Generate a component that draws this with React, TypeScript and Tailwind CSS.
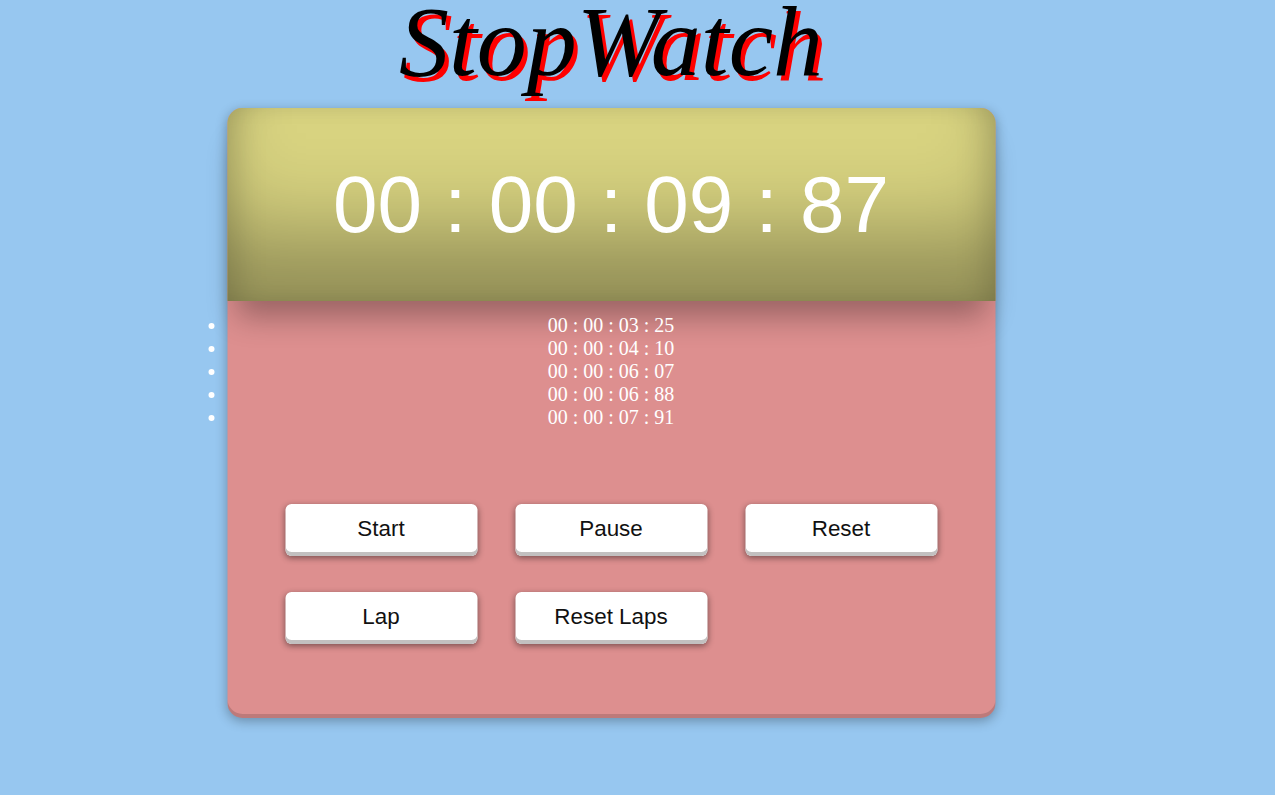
const laps = ["00 : 00 : 03 : 25", "00 : 00 : 04 : 10", "00 : 00 : 06 : 07", "00 : 00 : 06 : 88", "00 : 00 : 07 : 91"];
const buttons = ["Start", "Pause", "Reset", "Lap", "Reset Laps"];

export default function App() {
  return (
    <div className="min-h-[795px] w-full bg-[#97c7f0]">
      <div className="mx-auto flex w-[768px] -translate-x-[26.5px] flex-col items-center">
        <h1 className="h-[108px] font-['Liberation_Serif',serif] text-[100px] leading-[83px] font-normal whitespace-nowrap text-black italic [text-shadow:4px_5px_0_#ff0000]">
          StopWatch
        </h1>

        <div className="h-[610px] w-full rounded-[15px] bg-[#dd8f8f] shadow-[inset_0_-4px_0_rgba(0,0,0,0.14),0_3px_12px_rgba(0,0,0,0.3)]">
          {/* timer panel, its outer shadow falls on the laps below */}
          <div className="relative flex h-[193px] items-center justify-center rounded-t-[15px] bg-[#d8d380] font-['Liberation_Sans',sans-serif] text-[80px] text-white shadow-[inset_0_-98px_90px_-30px_rgba(0,0,0,0.33),inset_22px_0_32px_-15px_rgba(0,0,0,0.17),inset_-22px_0_32px_-15px_rgba(0,0,0,0.17),0_26px_30px_-10px_rgba(0,0,0,0.3)]">
            00 : 00 : 09 : 87
          </div>

          <div className="relative h-[203px] pt-[13px]">
            <ul className="list-disc text-center font-['Liberation_Serif',serif] text-[20px] leading-[23px] text-white marker:text-white">
              {laps.map((lap) => (
                <li key={lap}>{lap}</li>
              ))}
            </ul>
          </div>

          <div className="grid grid-cols-[192px_192px_192px] gap-x-[38px] gap-y-[36px] pl-[58px]">
            {buttons.map((label) => (
              <button
                key={label}
                className="h-[52px] rounded-[6px] bg-white pb-[3px] font-['Liberation_Sans',sans-serif] text-[22.4px] text-[#111111] shadow-[inset_0_-4px_0_#c2c0c0,0_2px_6px_rgba(0,0,0,0.45)]"
              >
                {label}
              </button>
            ))}
          </div>
        </div>
      </div>
    </div>
  );
}
